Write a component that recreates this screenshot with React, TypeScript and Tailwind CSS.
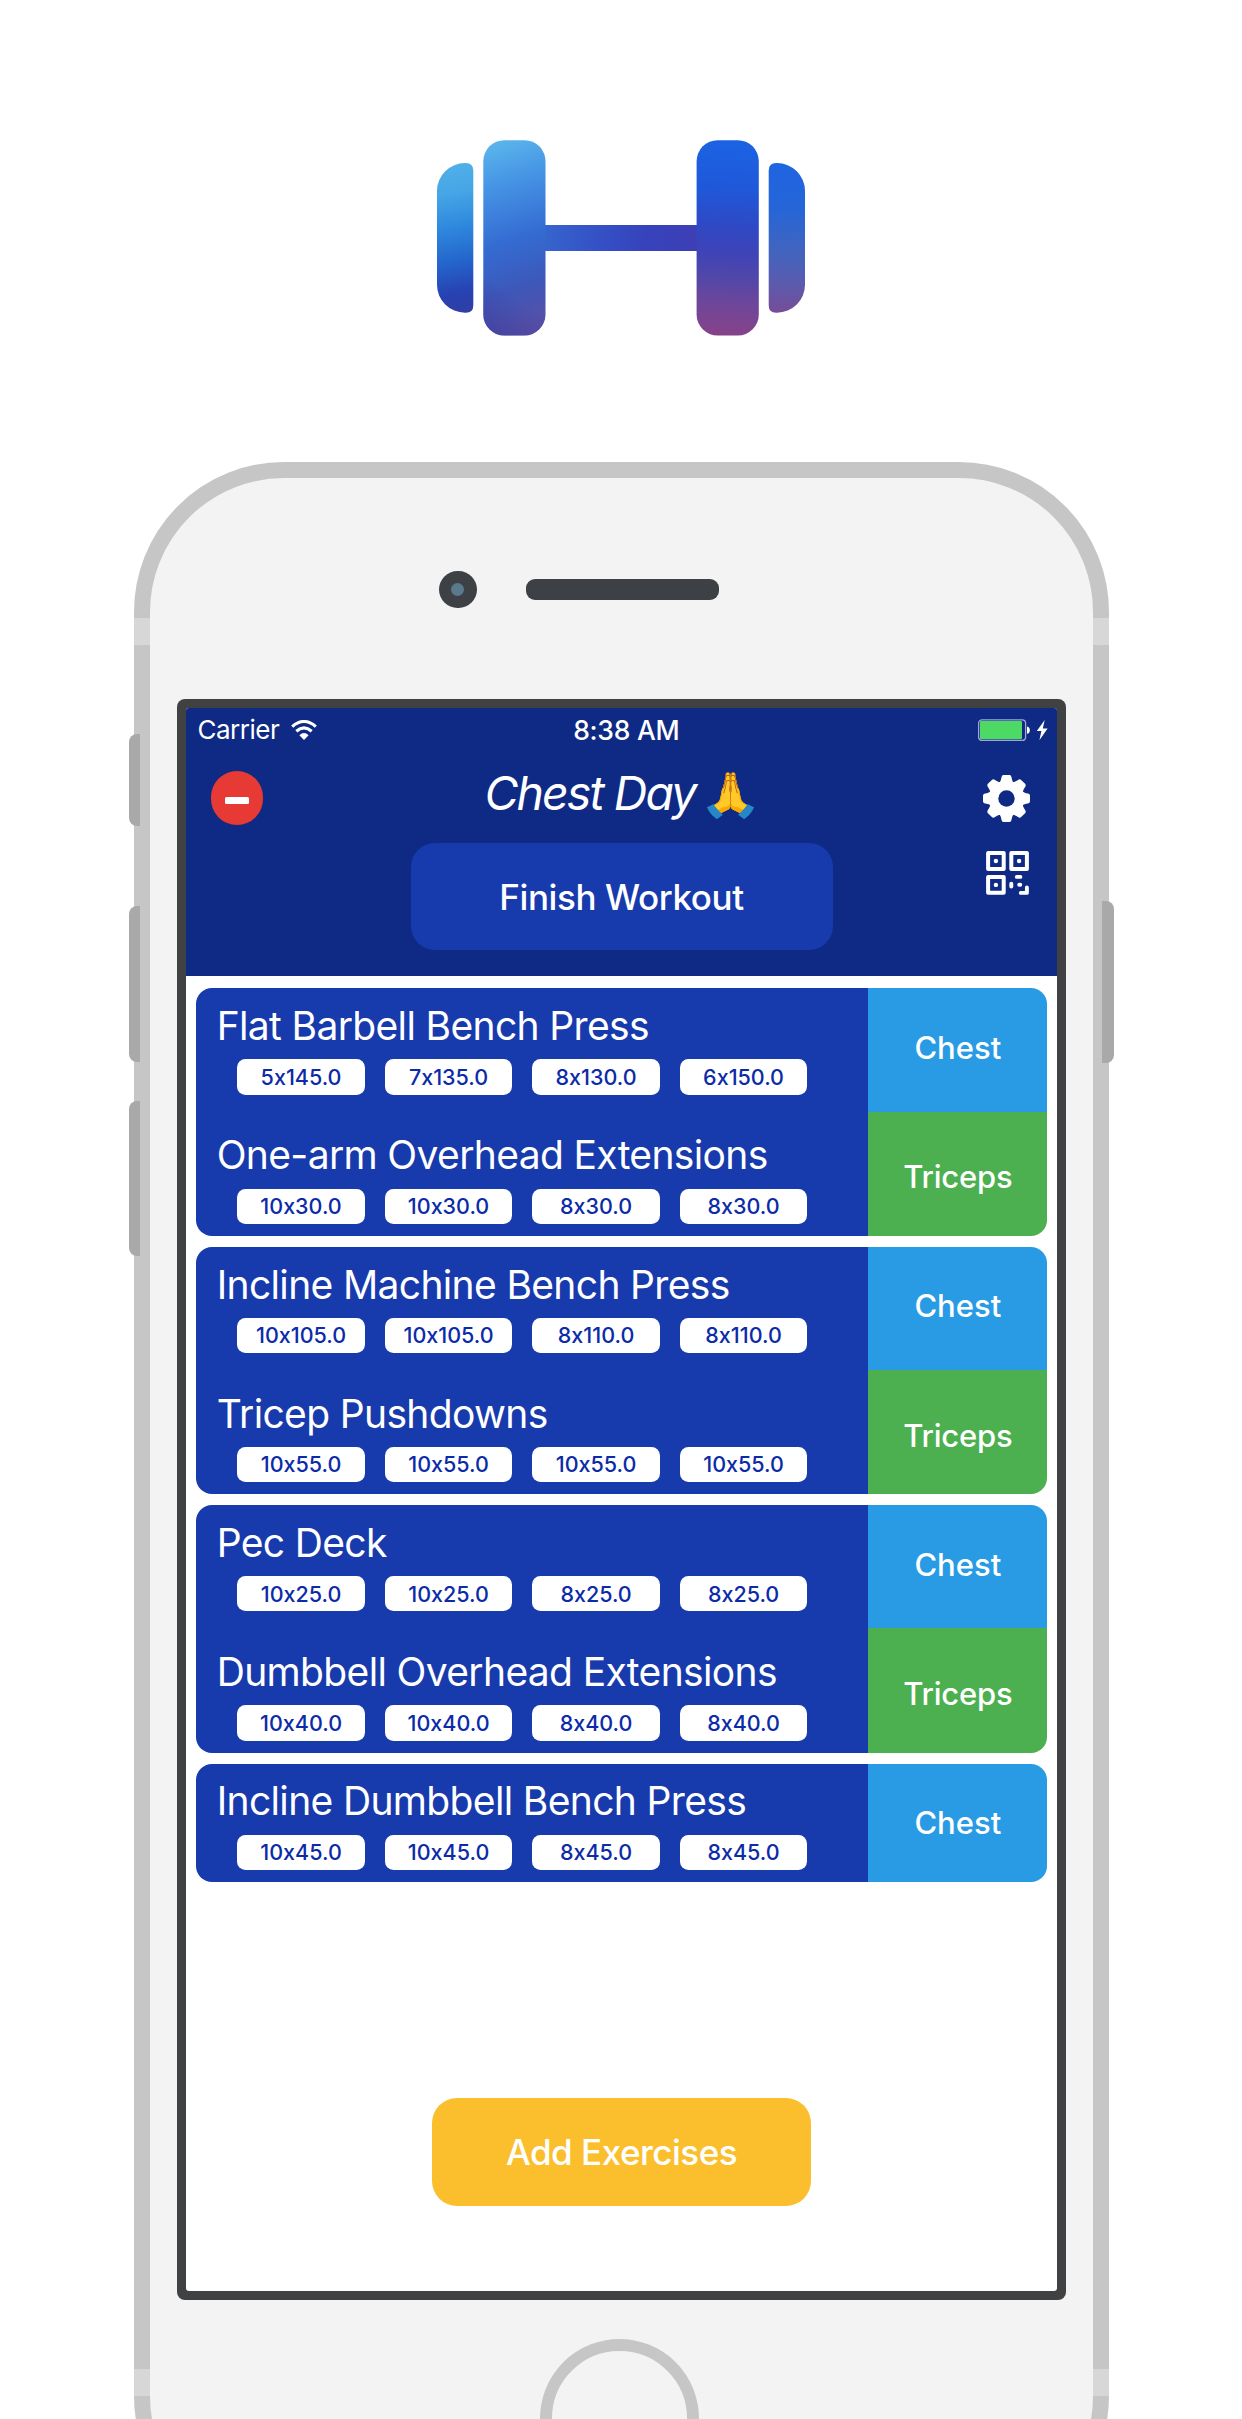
import React from 'react';

type Exercise = { name: string; sets: string[]; muscle: 'Chest' | 'Triceps' };

const workout: Exercise[][] = [
  [
    { name: 'Flat Barbell Bench Press', sets: ['5x145.0', '7x135.0', '8x130.0', '6x150.0'], muscle: 'Chest' },
    { name: 'One-arm Overhead Extensions', sets: ['10x30.0', '10x30.0', '8x30.0', '8x30.0'], muscle: 'Triceps' },
  ],
  [
    { name: 'Incline Machine Bench Press', sets: ['10x105.0', '10x105.0', '8x110.0', '8x110.0'], muscle: 'Chest' },
    { name: 'Tricep Pushdowns', sets: ['10x55.0', '10x55.0', '10x55.0', '10x55.0'], muscle: 'Triceps' },
  ],
  [
    { name: 'Pec Deck', sets: ['10x25.0', '10x25.0', '8x25.0', '8x25.0'], muscle: 'Chest' },
    { name: 'Dumbbell Overhead Extensions', sets: ['10x40.0', '10x40.0', '8x40.0', '8x40.0'], muscle: 'Triceps' },
  ],
  [{ name: 'Incline Dumbbell Bench Press', sets: ['10x45.0', '10x45.0', '8x45.0', '8x45.0'], muscle: 'Chest' }],
];

function Logo() {
  return (
    <svg className="mt-[140px] h-[196px] w-[368px] shrink-0" viewBox="437 140 368 196" aria-label="Dumbbell">
      <defs>
        <linearGradient id="outerLeft" gradientUnits="userSpaceOnUse" x1="440" y1="163" x2="468" y2="314">
          <stop offset="0" stopColor="#50b1e9" />
          <stop offset="0.2" stopColor="#46a6e6" />
          <stop offset="0.42" stopColor="#2f89de" />
          <stop offset="0.65" stopColor="#2465cc" />
          <stop offset="0.85" stopColor="#2742b2" />
          <stop offset="1" stopColor="#303ea4" />
        </linearGradient>
        <linearGradient id="innerLeft" gradientUnits="userSpaceOnUse" x1="480" y1="150" x2="540" y2="330">
          <stop offset="0" stopColor="#59b3ea" />
          <stop offset="0.2" stopColor="#4695e5" />
          <stop offset="0.5" stopColor="#346cd2" />
          <stop offset="0.75" stopColor="#3d58ba" />
          <stop offset="1" stopColor="#5c4fa3" />
        </linearGradient>
        <linearGradient id="innerLeftShade" gradientUnits="userSpaceOnUse" x1="484" y1="334" x2="512" y2="294">
          <stop offset="0" stopColor="#3c3d9e" stopOpacity="0.7" />
          <stop offset="1" stopColor="#3c3d9e" stopOpacity="0" />
        </linearGradient>
        <linearGradient id="handle" gradientUnits="userSpaceOnUse" x1="545" y1="230" x2="697" y2="250">
          <stop offset="0" stopColor="#3665cd" />
          <stop offset="0.35" stopColor="#3451c5" />
          <stop offset="0.65" stopColor="#3643bc" />
          <stop offset="1" stopColor="#3e3fb5" />
        </linearGradient>
        <linearGradient id="innerRight" gradientUnits="userSpaceOnUse" x1="732" y1="140" x2="722" y2="335">
          <stop offset="0" stopColor="#1b63e4" />
          <stop offset="0.25" stopColor="#1f58d9" />
          <stop offset="0.45" stopColor="#3048c4" />
          <stop offset="0.58" stopColor="#3f43b7" />
          <stop offset="0.7" stopColor="#5047a9" />
          <stop offset="0.85" stopColor="#704699" />
          <stop offset="1" stopColor="#864288" />
        </linearGradient>
        <linearGradient id="outerRight" gradientUnits="userSpaceOnUse" x1="790" y1="163" x2="784" y2="313">
          <stop offset="0" stopColor="#1f64e1" />
          <stop offset="0.3" stopColor="#2565d8" />
          <stop offset="0.6" stopColor="#4364be" />
          <stop offset="0.78" stopColor="#585cb0" />
          <stop offset="1" stopColor="#754d97" />
        </linearGradient>
      </defs>
      <path d="M473.3 170.5v134.7q0 7.5-7.5 7.5H465a28 28 0 0 1-28-28v-93.7a28 28 0 0 1 28-28h.8q7.5 0 7.5 7.5z" fill="url(#outerLeft)" />
      <rect x="545" y="225" width="153" height="26" fill="url(#handle)" />
      <rect x="483.3" y="140.2" width="62.2" height="195.3" rx="21" fill="url(#innerLeft)" />
      <rect x="483.3" y="140.2" width="62.2" height="195.3" rx="21" fill="url(#innerLeftShade)" />
      <rect x="696.6" y="140.2" width="62.2" height="195.3" rx="21" fill="url(#innerRight)" />
      <path d="M768.7 170.5v134.7q0 7.5 7.5 7.5h.8a28 28 0 0 0 28-28v-93.7a28 28 0 0 0-28-28h-.8q-7.5 0-7.5 7.5z" fill="url(#outerRight)" />
    </svg>
  );
}

function WifiIcon() {
  return (
    <svg className="ml-3 h-5 w-[26px]" viewBox="0 0 26 20" fill="none" stroke="#fff">
      <path d="M1.2 6.6Q13-3.6 24.8 6.6" strokeWidth="3.1" />
      <path d="M5.3 11.2Q13 4.6 20.7 11.2" strokeWidth="3.1" />
      <path d="M8.4 15.2Q13 11 17.6 15.2L13 20z" fill="#fff" stroke="none" />
    </svg>
  );
}

function BatteryIcon() {
  return (
    <svg className="h-[22px] w-[70px]" viewBox="0 0 70 22">
      <rect x="0.6" y="0.9" width="47" height="20.6" rx="3.4" fill="none" stroke="#a3a6d4" strokeWidth="1.3" />
      <rect x="2" y="2" width="42" height="18.2" rx="1.2" fill="#4cd964" />
      <path d="M49 7.6q2.8.6 2.8 3.6t-2.8 3.6z" fill="#fff" />
      <path d="M66.7 1L58.8 12h4.6l-2 9.2 8.2-11.8h-4.8z" fill="#fff" />
    </svg>
  );
}

function GearIcon() {
  return (
    <svg className="h-[47px] w-[47px]" viewBox="-23.5 -23.5 47 47">
      <g fill="#fff">
        {[0, 45, 90, 135, 180, 225, 270, 315].map((a) => (
          <path
            key={a}
            transform={`rotate(${a})`}
            d="M0 0L-7.4 -15.6C-6.5 -16.4 -6 -17.4 -5.6 -18.8L-4.7 -22.2Q-4.2 -23.5 -2.8 -23.5H2.8Q4.2 -23.5 4.7 -22.2L5.6 -18.8C6 -17.4 6.5 -16.4 7.4 -15.6Z"
          />
        ))}
        <circle r="17.2" />
      </g>
      <circle r="8.2" fill="#0f2a84" />
    </svg>
  );
}

function QrIcon() {
  return (
    <svg className="h-11 w-[43px]" viewBox="0 0 43 44" fill="none" stroke="#fff">
      <g strokeWidth="4" strokeLinejoin="round">
        <rect x="2.1" y="2.1" width="15.6" height="15.8" />
        <rect x="25.3" y="2.1" width="15.6" height="15.8" />
        <rect x="2.1" y="26" width="15.6" height="15.8" />
      </g>
      <g fill="#fff" stroke="none">
        <circle cx="9.9" cy="10" r="2.2" />
        <circle cx="33.1" cy="10" r="2.2" />
        <circle cx="9.9" cy="33.9" r="2.2" />
      </g>
      <g strokeWidth="3.9" strokeLinecap="round" strokeLinejoin="round">
        <path d="M30.8 25.9h3.6" />
        <path d="M25.3 32.8v2.8" />
        <path d="M33.2 33.8h1.1" />
        <path d="M34.8 41.9h6.1v-5.5" />
      </g>
    </svg>
  );
}

function ExerciseCard({ group }: { group: Exercise[] }) {
  return (
    <div className="flex w-[851.6px] overflow-hidden rounded-2xl">
      <div className="flex flex-1 flex-col gap-[10.9px] bg-[#173aad] pl-[21px]">
        {group.map((ex) => (
          <div key={ex.name} className="h-[118.3px] pt-[17.8px]">
            <h2 className="h-10 text-[39px] leading-10 font-normal tracking-[-0.65px] whitespace-nowrap text-white">{ex.name}</h2>
            <div className="mt-[13.1px] ml-[20.6px] flex gap-5">
              {ex.sets.map((set, i) => (
                <span
                  key={i}
                  className="flex h-[35.3px] w-[127.5px] items-center justify-center rounded-[8.5px] bg-white pt-px text-[21.5px] leading-none font-medium text-[#0c2ba8]"
                >
                  {set}
                </span>
              ))}
            </div>
          </div>
        ))}
      </div>
      <div className="flex w-[179px] flex-col text-[31px] font-medium text-white">
        {group.map((ex, i) => (
          <div
            key={ex.name}
            className={
              (ex.muscle === 'Chest' ? 'bg-[#299be5]' : 'bg-[#4caf50] tracking-[-0.2px]') +
              ' flex flex-1 items-center justify-center leading-none ' +
              (group.length === 1 ? '' : i === 0 ? 'pb-[5px]' : 'pt-[6px]')
            }
          >
            {ex.muscle}
          </div>
        ))}
      </div>
    </div>
  );
}

function Header() {
  return (
    <header className="h-[268px] bg-[#0f2a84] text-white">
      <div className="grid h-11 grid-cols-[1fr_auto_1fr] items-center pr-[9px] pl-[11.5px] text-[26.5px] leading-none">
        <div className="flex items-center">
          <span className="text-[26px] tracking-[-0.5px]">Carrier</span>
          <WifiIcon />
        </div>
        <span className="pl-[7px] font-medium tracking-[-0.26px]">8:38 AM</span>
        <div className="flex justify-end">
          <BatteryIcon />
        </div>
      </div>
      <div className="grid grid-cols-[1fr_422px_1fr]">
        <div className="pt-[19.5px] pl-[24.5px]">
          <button className="flex h-[54px] w-[52.5px] items-center justify-center rounded-full bg-[#e73a35]" aria-label="Remove">
            <span className="mt-1 h-[6.6px] w-6 rounded-[1.5px] bg-white" />
          </button>
        </div>
        <div className="flex flex-col items-center">
          <div className="mt-2 flex h-[68px] items-center gap-[3px] whitespace-nowrap">
            <h1 className="text-[46.5px] font-normal tracking-[-1.95px] italic">Chest Day</h1>
            <span className="w-[60px] origin-left scale-x-115 text-[44px] leading-none">🙏</span>
          </div>
          <button className="mt-[14.7px] h-[107.3px] w-[422px] rounded-[24px] bg-[#173aad] pt-[2px] text-[35px] font-medium tracking-[-0.4px]">
            Finish Workout
          </button>
        </div>
        <div className="flex flex-col items-end pr-[27.5px]">
          <div className="pt-[22.8px]">
            <GearIcon />
          </div>
          <div className="mt-[29.2px] pr-[1px]">
            <QrIcon />
          </div>
        </div>
      </div>
    </header>
  );
}

export default function App() {
  return (
    <div className="flex h-[2419px] w-[1242px] flex-col items-center overflow-hidden bg-white [font-family:Inter,'Liberation_Sans','Noto_Color_Emoji',sans-serif] [font-feature-settings:'calt'_0]">
      <Logo />
      <div className="relative mt-[126.3px] h-[2084px] w-[975px] shrink-0 rounded-[150px] border-[16px] border-[#c6c6c6] bg-[#f3f3f3]">
        {/* Side buttons and antenna bands over the frame */}
        <div className="absolute top-[256px] -left-[21px] h-[91.5px] w-[11.5px] rounded-l-[8px] bg-[#a9a9a9]" />
        <div className="absolute top-[428px] -left-[21px] h-[155.5px] w-[11.5px] rounded-l-[8px] bg-[#a9a9a9]" />
        <div className="absolute top-[622.7px] -left-[21px] h-[155.5px] w-[11.5px] rounded-l-[8px] bg-[#a9a9a9]" />
        <div className="absolute top-[423px] -right-[21px] h-[162px] w-[11.5px] rounded-r-[8px] bg-[#a9a9a9]" />
        <div className="absolute top-[139.5px] -left-[16px] h-[27.5px] w-4 bg-[#d7d7d7]" />
        <div className="absolute top-[139.5px] -right-[16px] h-[27.5px] w-4 bg-[#d7d7d7]" />
        <div className="absolute top-[1891px] -left-[16px] h-[27px] w-4 bg-[#d7d7d7]" />
        <div className="absolute top-[1891px] -right-[16px] h-[27px] w-4 bg-[#d7d7d7]" />

        <div className="flex h-[220.7px] items-start pt-[92.7px] pl-[289.7px]">
          <div className="flex size-[37.4px] items-center justify-center rounded-full bg-[#3d4145]">
            <div className="size-[13px] rounded-full bg-[#5a798c]" />
          </div>
          <div className="mt-[7.6px] ml-[49.9px] h-[21.6px] w-[192.4px] rounded-[9px] bg-[#3d4145]" />
        </div>

        <div className="ml-[27.5px] h-[1601px] w-[889px] rounded-[8px] bg-[#404142] p-[9px]">
          <div className="flex h-full flex-col items-center overflow-hidden rounded-[3px] bg-white">
            <div className="w-full">
              <Header />
            </div>
            <main className="flex flex-col items-center pt-[12.5px]">
              <div className="flex flex-col gap-[10.9px]">
                {workout.map((group) => (
                  <ExerciseCard key={group[0].name} group={group} />
                ))}
              </div>
              <button className="mt-[216.1px] h-[107.5px] w-[379.3px] rounded-[25px] bg-[#fbbf2d] pt-px text-[35px] font-medium tracking-[-0.5px] text-white">
                Add Exercises
              </button>
            </main>
          </div>
        </div>

        <div className="mt-[39.3px] ml-[390.5px] size-[159px] rounded-full border-[12.5px] border-[#c6c6c6]" />
      </div>
    </div>
  );
}
